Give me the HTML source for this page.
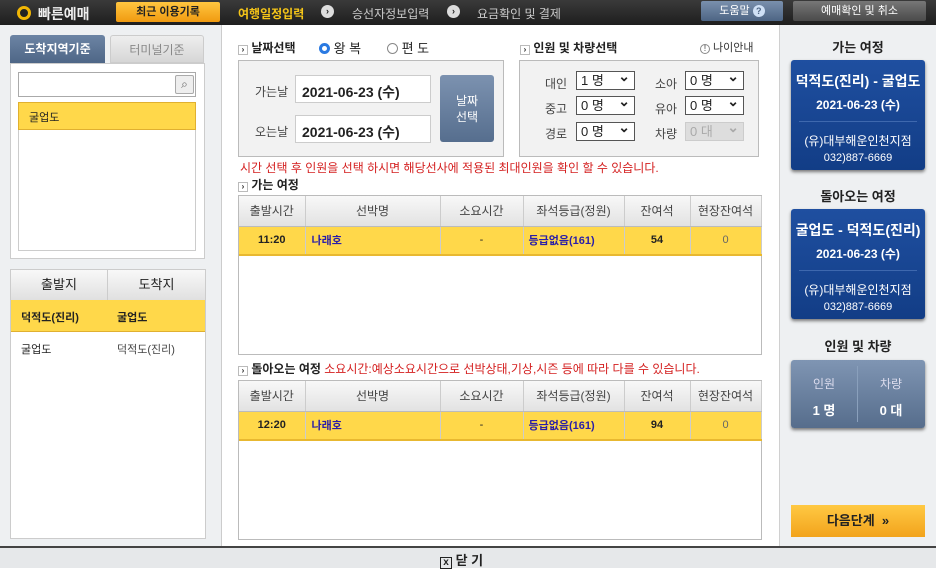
<!DOCTYPE html>
<html><head><meta charset="utf-8"><style>
*{box-sizing:border-box;margin:0;padding:0}
body{width:936px;height:568px;position:relative;overflow:hidden;background:#fff;font-family:"Liberation Sans","Noto Sans CJK KR","NanumGothic",sans-serif;font-size:12px;color:#222}
.a{position:absolute}
.top{left:0;top:0;width:936px;height:25px;background:linear-gradient(#3a3a3a,#1e1e1e)}
.circ{width:14px;height:14px;border-radius:50%;border:3px solid #f2b705;background:#222}
.arr{width:13px;height:13px;border-radius:50%;background:#ddd;color:#222;font-size:9px;font-weight:bold;text-align:center;line-height:13px}
.c{text-align:center}
.sel{border:1px solid #555;background:#fff;height:19px;font-size:13px;padding-left:4px;line-height:17px}
.sel:after{content:"⌄";position:absolute;right:4px;top:-4px;font-weight:bold;font-size:14px}
th,td{border-right:1px solid #ccc}
table{border-collapse:collapse;position:absolute;table-layout:fixed}
.hd td{height:30px;background:linear-gradient(#f8f8f8,#e2e2e2);color:#444;text-align:center;font-size:12px;border-bottom:1px solid #bbb}
.yr td{height:29px;background:#ffd84a;text-align:center;font-size:11px;font-weight:bold;border-bottom:2px solid #e8b830}
.blue{color:#2a1ea8}
.card{background:linear-gradient(#1f4fa0,#123d86);border-radius:3px;color:#fff;text-align:center;box-shadow:0 2px 3px #777}
.ttl{font-weight:bold;font-size:13px;color:#222;text-align:center;width:156px;left:780px}
</style></head><body>
<div class="a top"></div>
<div class="a circ" style="left:17px;top:6px"></div>
<div class="a" style="left:38px;top:4px;color:#eee;font-size:14px;font-weight:bold">빠른예매</div>
<div class="a c" style="left:116px;top:2px;width:104px;height:20px;background:linear-gradient(#ffc640,#f09a10);border-radius:2px;font-size:11px;font-weight:bold;line-height:20px;color:#222">최근 이용기록</div>
<div class="a" style="left:238px;top:5px;color:#f5c518;font-weight:bold">여행일정입력</div>
<div class="a arr" style="left:321px;top:5px">›</div>
<div class="a" style="left:352px;top:5px;color:#ccc">승선자정보입력</div>
<div class="a arr" style="left:447px;top:5px">›</div>
<div class="a" style="left:477px;top:5px;color:#ccc">요금확인 및 결제</div>
<div class="a c" style="left:701px;top:1px;width:82px;height:20px;background:linear-gradient(#7a90ad,#4d6584);border-radius:2px;color:#fff;font-size:11px;line-height:20px">도움말 <span style="display:inline-block;width:12px;height:12px;border-radius:50%;background:#cfe0f5;color:#4d6584;font-size:9px;line-height:12px;font-weight:bold">?</span></div>
<div class="a c" style="left:793px;top:1px;width:133px;height:20px;background:linear-gradient(#777,#4a4a4a);border-radius:2px;color:#fff;font-size:11px;line-height:20px">예매확인 및 취소</div>

<div class="a" style="left:0;top:25px;width:222px;height:521px;background:#eef0f2;border-right:1px solid #ccc"></div>
<div class="a" style="left:779px;top:25px;width:157px;height:521px;background:#eef0f2;border-left:1px solid #d0d0d0"></div>

<div class="a c" style="left:10px;top:35px;width:95px;height:29px;background:linear-gradient(#6c84a4,#4d6585);color:#fff;font-weight:bold;line-height:29px;border-radius:3px 3px 0 0">도착지역기준</div>
<div class="a c" style="left:110px;top:35px;width:94px;height:28px;background:linear-gradient(#eee,#d6d6d6);color:#888;line-height:28px;border:1px solid #ccc;border-radius:3px 3px 0 0">터미널기준</div>
<div class="a" style="left:10px;top:63px;width:195px;height:196px;background:#fff;border:1px solid #ccc"></div>
<div class="a" style="left:18px;top:72px;width:178px;height:25px;border:1px solid #aaa;background:#fff"></div>
<div class="a c" style="left:175px;top:75px;width:19px;height:19px;border:1px solid #aaa;border-radius:2px;background:#eee;font-size:12px;line-height:17px;color:#666">⌕</div>
<div class="a" style="left:18px;top:102px;width:178px;height:28px;background:#ffd84a;border:1px solid #e0b030;padding:6px 10px;font-size:11px">굴업도</div>
<div class="a" style="left:18px;top:130px;width:178px;height:121px;border:1px solid #ccc;border-top:0"></div>

<div class="a" style="left:10px;top:269px;width:196px;height:270px;background:#fff;border:1px solid #ccc"></div>
<div class="a c" style="left:11px;top:270px;width:97px;height:30px;background:linear-gradient(#f8f8f8,#e0e0e0);line-height:30px;font-size:13px;border-right:1px solid #ccc">출발지</div>
<div class="a c" style="left:108px;top:270px;width:97px;height:30px;background:linear-gradient(#f8f8f8,#e0e0e0);line-height:30px;font-size:13px">도착지</div>
<div class="a" style="left:11px;top:300px;width:194px;height:32px;background:#ffd84a;border-bottom:1px solid #e0b030;font-size:11px;font-weight:bold"><span class="a" style="left:10px;top:9px">덕적도(진리)</span><span class="a" style="left:106px;top:9px">굴업도</span></div>
<div class="a" style="left:21px;top:341px;font-size:11px">굴업도</div>
<div class="a" style="left:117px;top:341px;font-size:11px;color:#444">덕적도(진리)</div>

<div class="a" style="left:238px;top:39px;font-size:12px;font-weight:bold"><span style="display:inline-block;width:10px;height:10px;border:1px solid #bbb;font-size:8px;line-height:8px;text-align:center">›</span> 날짜선택</div>
<div class="a" style="left:319px;top:38px;font-size:13px"><span style="display:inline-block;width:11px;height:11px;border-radius:50%;border:3px solid #2a7ae2;vertical-align:-1px;background:#fff"></span> 왕 복</div>
<div class="a" style="left:387px;top:38px;font-size:13px"><span style="display:inline-block;width:11px;height:11px;border-radius:50%;border:1px solid #888;vertical-align:-1px"></span> 편 도</div>
<div class="a" style="left:238px;top:60px;width:266px;height:97px;background:#f2f2f2;border:1px solid #bbb"></div>
<div class="a" style="left:255px;top:83px;color:#444">가는날</div>
<div class="a" style="left:255px;top:123px;color:#444">오는날</div>
<div class="a" style="left:295px;top:75px;width:136px;height:28px;background:#fff;border:1px solid #ccc;padding:6px 6px;font-size:14px;font-weight:bold">2021-06-23 (수)</div>
<div class="a" style="left:295px;top:115px;width:136px;height:28px;background:#fff;border:1px solid #ccc;padding:6px 6px;font-size:14px;font-weight:bold">2021-06-23 (수)</div>
<div class="a c" style="left:440px;top:75px;width:54px;height:67px;background:linear-gradient(#7c92b0,#566e8e);border-radius:3px;color:#fff;font-size:12px;padding-top:18px;line-height:16px">날짜<br>선택</div>

<div class="a" style="left:520px;top:39px;font-weight:bold"><span style="display:inline-block;width:10px;height:10px;border:1px solid #bbb;font-size:8px;line-height:8px;text-align:center">›</span> 인원 및 차량선택</div>
<div class="a" style="left:700px;top:39px;font-size:11px;color:#333"><span style="display:inline-block;width:10px;height:10px;border-radius:50%;border:1px solid #888;font-size:8px;line-height:8px;text-align:center">!</span> 나이안내</div>
<div class="a" style="left:519px;top:60px;width:240px;height:97px;background:#f2f2f2;border:1px solid #bbb"></div>
<div class="a" style="left:545px;top:75px;color:#444">대인</div>
<div class="a" style="left:545px;top:100px;color:#444">중고</div>
<div class="a" style="left:545px;top:125px;color:#444">경로</div>
<div class="a" style="left:655px;top:75px;color:#444">소아</div>
<div class="a" style="left:655px;top:100px;color:#444">유아</div>
<div class="a" style="left:655px;top:125px;color:#444">차량</div>
<div class="a sel" style="left:576px;top:71px;width:59px">1 명</div>
<div class="a sel" style="left:576px;top:96px;width:59px">0 명</div>
<div class="a sel" style="left:576px;top:122px;width:59px">0 명</div>
<div class="a sel" style="left:685px;top:71px;width:59px">0 명</div>
<div class="a sel" style="left:685px;top:96px;width:59px">0 명</div>
<div class="a sel" style="left:685px;top:122px;width:59px;background:#ddd;border-color:#ccc;color:#aaa">0 대</div>

<div class="a" style="left:240px;top:159px;color:#d42020;font-size:12px">시간 선택 후 인원을 선택 하시면 해당선사에 적용된 최대인원을 확인 할 수 있습니다.</div>
<div class="a" style="left:238px;top:176px;font-weight:bold"><span style="display:inline-block;width:10px;height:10px;border:1px solid #bbb;font-size:8px;line-height:8px;text-align:center">›</span> 가는 여정</div>
<div class="a" style="left:238px;top:195px;width:524px;height:160px;border:1px solid #bbb"></div>
<table style="left:239px;top:196px;width:522px">
<colgroup><col style="width:66px"><col style="width:135px"><col style="width:83px"><col style="width:101px"><col style="width:66px"><col style="width:71px"></colgroup>
<tr class="hd"><td>출발시간</td><td>선박명</td><td>소요시간</td><td>좌석등급(정원)</td><td>잔여석</td><td>현장잔여석</td></tr>
<tr class="yr"><td>11:20</td><td class="blue" style="text-align:left;padding-left:6px">나래호</td><td style="font-weight:normal">-</td><td class="blue" style="text-align:left;padding-left:5px">등급없음(161)</td><td>54</td><td style="font-weight:normal;color:#666">0</td></tr>
</table>

<div class="a" style="left:238px;top:360px;font-weight:bold"><span style="display:inline-block;width:10px;height:10px;border:1px solid #bbb;font-size:8px;line-height:8px;text-align:center">›</span> 돌아오는 여정 <span style="color:#d42020;font-weight:normal">소요시간:예상소요시간으로 선박상태,기상,시즌 등에 따라 다를 수 있습니다.</span></div>
<div class="a" style="left:238px;top:380px;width:524px;height:160px;border:1px solid #bbb"></div>
<table style="left:239px;top:381px;width:522px">
<colgroup><col style="width:66px"><col style="width:135px"><col style="width:83px"><col style="width:101px"><col style="width:66px"><col style="width:71px"></colgroup>
<tr class="hd"><td>출발시간</td><td>선박명</td><td>소요시간</td><td>좌석등급(정원)</td><td>잔여석</td><td>현장잔여석</td></tr>
<tr class="yr"><td>12:20</td><td class="blue" style="text-align:left;padding-left:6px">나래호</td><td style="font-weight:normal">-</td><td class="blue" style="text-align:left;padding-left:5px">등급없음(161)</td><td>94</td><td style="font-weight:normal;color:#666">0</td></tr>
</table>

<div class="a ttl" style="top:37px">가는 여정</div>
<div class="a card" style="left:791px;top:60px;width:134px;height:110px">
<div style="font-size:14px;font-weight:bold;margin-top:11px">덕적도(진리) - 굴업도</div>
<div style="font-size:12px;font-weight:bold;margin-top:5px">2021-06-23 (수)</div>
<div style="border-top:1px solid #3e68ae;margin:8px 8px 0"></div>
<div style="font-size:12px;margin-top:10px">(유)대부해운인천지점</div>
<div style="font-size:11px;margin-top:3px">032)887-6669</div></div>
<div class="a ttl" style="top:186px">돌아오는 여정</div>
<div class="a card" style="left:791px;top:209px;width:134px;height:110px">
<div style="font-size:14px;font-weight:bold;margin-top:11px">굴업도 - 덕적도(진리)</div>
<div style="font-size:12px;font-weight:bold;margin-top:5px">2021-06-23 (수)</div>
<div style="border-top:1px solid #3e68ae;margin:8px 8px 0"></div>
<div style="font-size:12px;margin-top:10px">(유)대부해운인천지점</div>
<div style="font-size:11px;margin-top:3px">032)887-6669</div></div>
<div class="a ttl" style="top:336px">인원 및 차량</div>
<div class="a" style="left:791px;top:360px;width:134px;height:68px;background:linear-gradient(#7f95b3,#566d8c);border-radius:3px;box-shadow:0 2px 3px #777;color:#fff">
<div class="a" style="left:66px;top:6px;height:56px;border-left:1px solid #8aa0bc"></div>
<div class="a c" style="left:0;top:15px;width:66px;font-size:12px;color:#dde">인원</div>
<div class="a c" style="left:67px;top:15px;width:66px;font-size:12px;color:#dde">차량</div>
<div class="a c" style="left:0;top:40px;width:66px;font-weight:bold;font-size:13px">1 명</div>
<div class="a c" style="left:67px;top:40px;width:66px;font-weight:bold;font-size:13px">0 대</div></div>
<div class="a c" style="left:791px;top:505px;width:134px;height:32px;background:linear-gradient(#ffc943,#f2a31c);line-height:32px;font-weight:bold;font-size:13px">다음단계 &nbsp;»</div>

<div class="a" style="left:0;top:546px;width:936px;height:22px;background:#e6e8ea;border-top:2px solid #444"></div>
<div class="a" style="left:440px;top:550px;font-weight:bold;font-size:13px"><span style="display:inline-block;width:12px;height:12px;border:1px solid #222;font-size:10px;line-height:10px;text-align:center;vertical-align:0">x</span> 닫 기</div>
</body></html>
